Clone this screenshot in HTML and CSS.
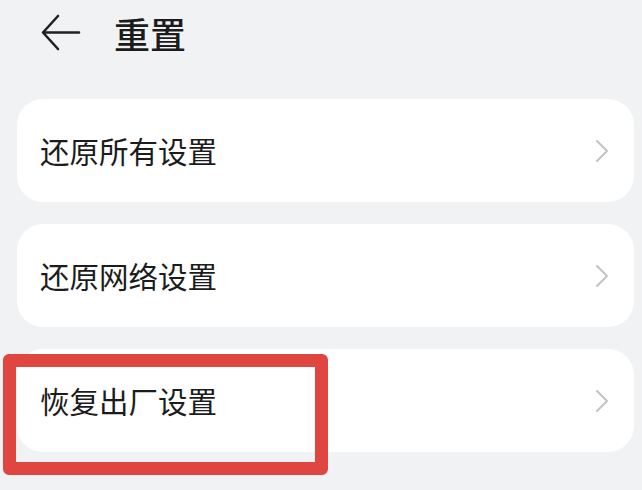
FILE: index.html
```html
<!DOCTYPE html>
<html lang="zh-CN">
<head>
<meta charset="utf-8">
<title>重置</title>
<link rel="stylesheet" href="styles.css">
</head>
<body>
<div class="page">
  <header class="top">
    <svg class="back" width="40" height="38" viewBox="0 0 40 38" aria-hidden="true">
      <path d="M17 2 L2 18.5 L17 35 M2 18.5 H38" fill="none" stroke="#222" stroke-width="2.6" stroke-linecap="round" stroke-linejoin="round"/>
    </svg>
    <h1 class="title">重置</h1>
  </header>
  <ul class="list">
    <li class="card"><span class="label">还原所有设置</span><svg class="chev" width="14" height="24" viewBox="0 0 14 24"><path d="M2 2 L12 12 L2 22" fill="none" stroke="#c3c3c5" stroke-width="2" stroke-linecap="round" stroke-linejoin="round"/></svg></li>
    <li class="card"><span class="label">还原网络设置</span><svg class="chev" width="14" height="24" viewBox="0 0 14 24"><path d="M2 2 L12 12 L2 22" fill="none" stroke="#c3c3c5" stroke-width="2" stroke-linecap="round" stroke-linejoin="round"/></svg></li>
    <li class="card"><span class="label">恢复出厂设置</span><svg class="chev" width="14" height="24" viewBox="0 0 14 24"><path d="M2 2 L12 12 L2 22" fill="none" stroke="#c3c3c5" stroke-width="2" stroke-linecap="round" stroke-linejoin="round"/></svg></li>
  </ul>
  <div class="highlight"></div>
</div>
</body>
</html>
```
FILE: styles.css
```css
html, body {
  margin: 0;
  padding: 0;
  background: #f1f2f4;
}
body {
  font-family: "Noto Sans CJK SC", "Noto Sans", sans-serif;
  color: #1c1c1c;
  width: 642px;
  height: 490px;
  overflow: hidden;
}
.page {
  position: relative;
  width: 642px;
  height: 490px;
}
.top {
  display: flex;
  align-items: center;
  height: 66px;
  padding-left: 41px;
  gap: 33px;
}
.back {
  display: block;
  flex: none;
}
.title {
  margin: 0;
  font-size: 36px;
  font-weight: 500;
  line-height: 1;
  color: #1c1c1c;
}
.list {
  list-style: none;
  margin: 33px 8px 0 17px;
  padding: 0;
  display: flex;
  flex-direction: column;
  gap: 22px;
}
.card {
  height: 103px;
  background: #fff;
  border-radius: 26px;
  display: flex;
  align-items: center;
  justify-content: space-between;
  padding: 0 25px 0 23px;
}
.label {
  font-size: 29.5px;
  line-height: 1;
  color: #1c1c1c;
}
.chev {
  display: block;
  flex: none;
}
.highlight {
  position: absolute;
  left: 3px;
  top: 354px;
  width: 299px;
  height: 95px;
  border: 13px solid #e0453f;
  border-radius: 6px;
}
```
